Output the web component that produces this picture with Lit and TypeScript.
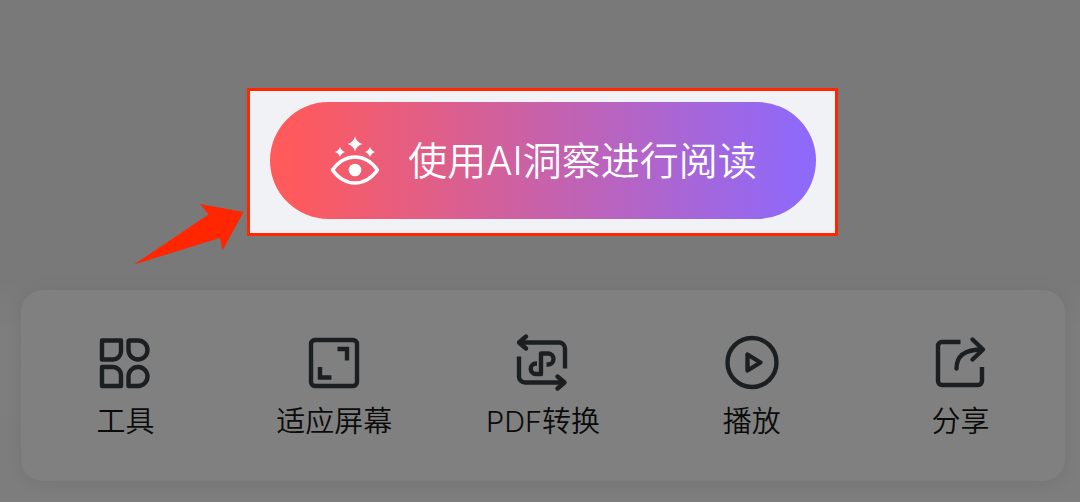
import { LitElement, html, css, svg } from "lit";
import { customElement } from "lit/decorators.js";

const tabs = [
  {
    label: "工具",
    icon: svg`
      <path d="M9 9.500h19v11a8 8 0 0 1-8 8H9z"/>
      <path d="M36 9.500h9a9.500 9.500 0 1 1-9.500 9.500v-9z"/>
      <path d="M9 36h11a8 8 0 0 1 8 8v11H9z"/>
      <path d="M35.500 55v-9.500a9.500 9.500 0 1 1 9.500 9.500z"/>`,
  },
  {
    label: "适应屏幕",
    icon: svg`
      <rect x="9" y="9" width="46" height="46" rx="4"/>
      <path stroke-linecap="butt" stroke-linejoin="miter" d="M35.500 18h9.500v11.500M18 36v10.500h11.500"/>`,
  },
  {
    label: "PDF转换",
    icon: svg`
      <path stroke-linecap="butt" d="M8 11.500h40a6 6 0 0 1 6 6v20M8 25.500v20a6 6 0 0 0 6 6h39"/>
      <path d="M15 5.500l-7 6 7 6M46.500 45.500l7 6-7 6"/>
      <path stroke-linecap="butt" d="M35.500 33.500h1.500a5.500 5.500 0 0 0 0-11h-7V43h-5a5 5 0 0 1 0-10.500h1"/>`,
  },
  {
    label: "播放",
    icon: svg`
      <circle cx="32" cy="31.500" r="24.500"/>
      <path d="M27.500 23.500v16l13-8z"/>`,
  },
  {
    label: "分享",
    icon: svg`
      <path stroke-linecap="butt" d="M31.500 11H13a4 4 0 0 0-4 4v35a4 4 0 0 0 4 4h36a4 4 0 0 0 4-4V36"/>
      <path d="M27.500 37.500c0-12 7-19 26-19M43.500 8.500l10.500 10-10.500 10"/>`,
  },
];

@customElement("app-root")
export class AppRoot extends LitElement {
  static styles = css`
    :host {
      display: block;
      min-height: 100vh;
      box-sizing: border-box;
      padding-top: 88px;
      background: linear-gradient(#797979 0, #797979 280px, #7e7e7e 330px, #7d7d7d 100%);
      font-family: Inter, "Noto Sans CJK SC", sans-serif;
      font-weight: 350;
    }
    .callout {
      display: grid;
      grid-template-columns: 1fr auto 1fr;
      align-items: start;
      padding: 0 15px 0 20px;
    }
    .arrow {
      justify-self: end;
      margin: 115px 3px -62px 0;
      height: 62px;
      width: 112px;
      fill: #ff2600;
    }
    .frame {
      border: 3px solid #ff2600;
      background: #f1f2f5;
      padding: 11px 19px 14px 20px;
    }
    .insight {
      display: flex;
      align-items: center;
      gap: 21px;
      height: 117px;
      padding: 0 59px 0 53px;
      border: 0;
      border-radius: 59px;
      background: linear-gradient(90deg, #ff5a5c 4%, #8f69fa 97%);
      color: #fff;
      font: inherit;
      font-size: 39px;
      line-height: 56px;
      white-space: nowrap;
      cursor: pointer;
    }
    .eye {
      width: 64px;
      height: 64px;
      fill: #fff;
    }
    .tabs {
      display: grid;
      grid-template-columns: repeat(5, 1fr);
      margin: 54px 15px 0 21px;
      padding: 41px 0 38px;
      border-radius: 22px;
      background: #808080;
      box-shadow: 0 2px 18px rgba(0, 0, 0, 0.08);
    }
    .tab {
      display: flex;
      flex-direction: column;
      align-items: center;
      gap: 6px;
      padding: 0;
      border: 0;
      background: none;
      color: #0b0b0b;
      font: inherit;
      font-size: 29px;
      line-height: 42px;
      white-space: nowrap;
      cursor: pointer;
    }
    .icon {
      width: 64px;
      height: 64px;
      fill: none;
      stroke: #1b1f21;
      stroke-width: 4.4;
      stroke-linecap: round;
      stroke-linejoin: round;
    }
  `;

  render() {
    return html`
      <section class="callout">
        <svg class="arrow" viewBox="0 0 112 62" aria-hidden="true">
          <path d="M2 61.500L76.500 11.500L68 1L111.500 9L90.500 47.500L88 35z" />
        </svg>
        <div class="frame">
          <button class="insight" type="button">
            <svg class="eye" viewBox="0 0 64 64" aria-hidden="true">
              <path fill="none" stroke="#fff" stroke-width="3.500" stroke-linejoin="round"
                d="M9.500 41C16 32 24 28 32 28s16 4 22.500 13C48 50 40 54 32 54S16 50 9.500 41z" />
              <circle cx="32" cy="41" r="6.300" />
              <path d="M32 7.500q1.500 6 7.500 7.500-6 1.500-7.500 7.500-1.500-6-7.500-7.500 6-1.500 7.500-7.500z" />
              <path d="M17 18q1.500 4 5 5-3.500 1-5 5-1.500-4-5-5 3.500-1 5-5zM47 18q1.500 4 5 5-3.500 1-5 5-1.500-4-5-5 3.500-1 5-5z" />
            </svg>
            <span>使用AI洞察进行阅读</span>
          </button>
        </div>
      </section>
      <nav class="tabs">
        ${tabs.map(
          (tab) => html`
            <button class="tab" type="button">
              <svg class="icon" viewBox="0 0 64 64" aria-hidden="true">${tab.icon}</svg>
              <span>${tab.label}</span>
            </button>
          `
        )}
      </nav>
    `;
  }
}
